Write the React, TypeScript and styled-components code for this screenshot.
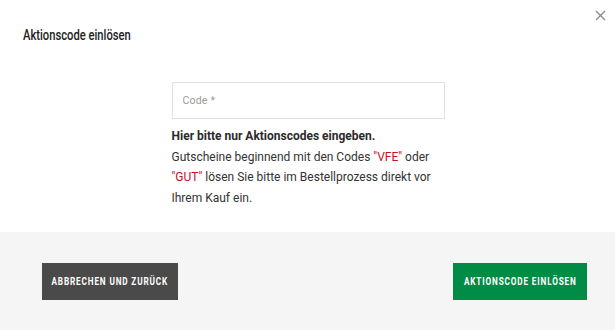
import React from 'react'
import styled, { createGlobalStyle } from 'styled-components'

const GlobalStyle = createGlobalStyle`
  html, body {
    margin: 0;
    padding: 0;
    background: #ffffff;
  }
  body {
    font-family: Roboto, 'Liberation Sans', sans-serif;
    color: #333333;
  }
`

// no condensed face installed, so squeeze the display type horizontally
const Squeeze = styled.span<{ $scale: number; $origin?: string }>`
  display: inline-block;
  transform: scaleX(${p => p.$scale});
  transform-origin: ${p => p.$origin || 'left'} center;
  white-space: nowrap;
`

const Modal = styled.div`
  width: 615px;
  height: 330px;
  display: flex;
  flex-direction: column;
  background: #ffffff;
  position: relative;
`

const Header = styled.div`
  height: 70px;
  display: flex;
  align-items: center;
  padding: 0 23px;
`

const Title = styled.h2`
  margin: 0;
  font-family: Roboto, 'Liberation Sans', sans-serif;
  font-size: 14px;
  font-weight: 500;
  color: #222222;
`

const Close = styled.button`
  position: absolute;
  top: 8px;
  right: 8px;
  width: 14px;
  height: 14px;
  padding: 0;
  border: none;
  background: transparent;
  cursor: pointer;
  display: flex;
  align-items: center;
  justify-content: center;
`

const Body = styled.div`
  flex: 1;
  display: flex;
  justify-content: center;
  padding-top: 12px;
`

const Content = styled.div`
  width: 273px;
  margin-left: 1px;
`

const Input = styled.input`
  box-sizing: border-box;
  display: block;
  width: 273px;
  height: 37px;
  border: 1px solid #e2e2e2;
  padding: 0 10px;
  font-family: Roboto, 'Liberation Sans', sans-serif;
  font-size: 10.5px;
  letter-spacing: 0.2px;
  outline: none;
  &::placeholder {
    color: #a09a96;
  }
`

const Text = styled.p`
  margin: 7px 0 0;
  font-size: 12px;
  line-height: 20.5px;
  color: #333333;
`

const Strong = styled.strong`
  font-weight: 700;
  color: #2a2a2a;
`

const Red = styled.span`
  color: #c4121f;
`

const Footer = styled.div`
  height: 98px;
  background: #f5f5f5;
  display: flex;
  align-items: center;
  justify-content: space-between;
  padding: 0 28px 0 42px;
  box-sizing: border-box;
`

const Button = styled.button<{ $variant: 'dark' | 'green'; $width: number }>`
  width: ${p => p.$width}px;
  height: 37px;
  padding: 0;
  border: none;
  background: ${p => (p.$variant === 'green' ? '#008c45' : '#4a4a4a')};
  color: #ffffff;
  font-family: Roboto, 'Liberation Sans', sans-serif;
  font-weight: 700;
  font-size: 10.5px;
  letter-spacing: 1.1px;
  text-transform: uppercase;
  cursor: pointer;
  display: flex;
  align-items: center;
  justify-content: center;
  overflow: hidden;
`

const App = () => (
  <>
    <GlobalStyle />
    <Modal>
      <Header>
        <Title>
          <Squeeze $scale={0.8}>Aktionscode einlösen</Squeeze>
        </Title>
      </Header>
      <Close aria-label="Schließen">
        <svg width="11" height="11" viewBox="0 0 11 11">
          <path d="M1 1L10 10M10 1L1 10" stroke="#8a8a8a" strokeWidth="1.3" />
        </svg>
      </Close>
      <Body>
        <Content>
          <Input placeholder="Code *" />
          <Text>
            <Strong>Hier bitte nur Aktionscodes eingeben.</Strong>
            <br />
            Gutscheine beginnend mit den Codes <Red>"VFE"</Red> oder <Red>"GUT"</Red> lösen Sie bitte
            im Bestellprozess direkt vor Ihrem Kauf ein.
          </Text>
        </Content>
      </Body>
      <Footer>
        <Button $variant="dark" $width={136}>
          <Squeeze $scale={0.78} $origin="center">Abbrechen und zurück</Squeeze>
        </Button>
        <Button $variant="green" $width={134}>
          <Squeeze $scale={0.78} $origin="center">Aktionscode einlösen</Squeeze>
        </Button>
      </Footer>
    </Modal>
  </>
)

export default App
